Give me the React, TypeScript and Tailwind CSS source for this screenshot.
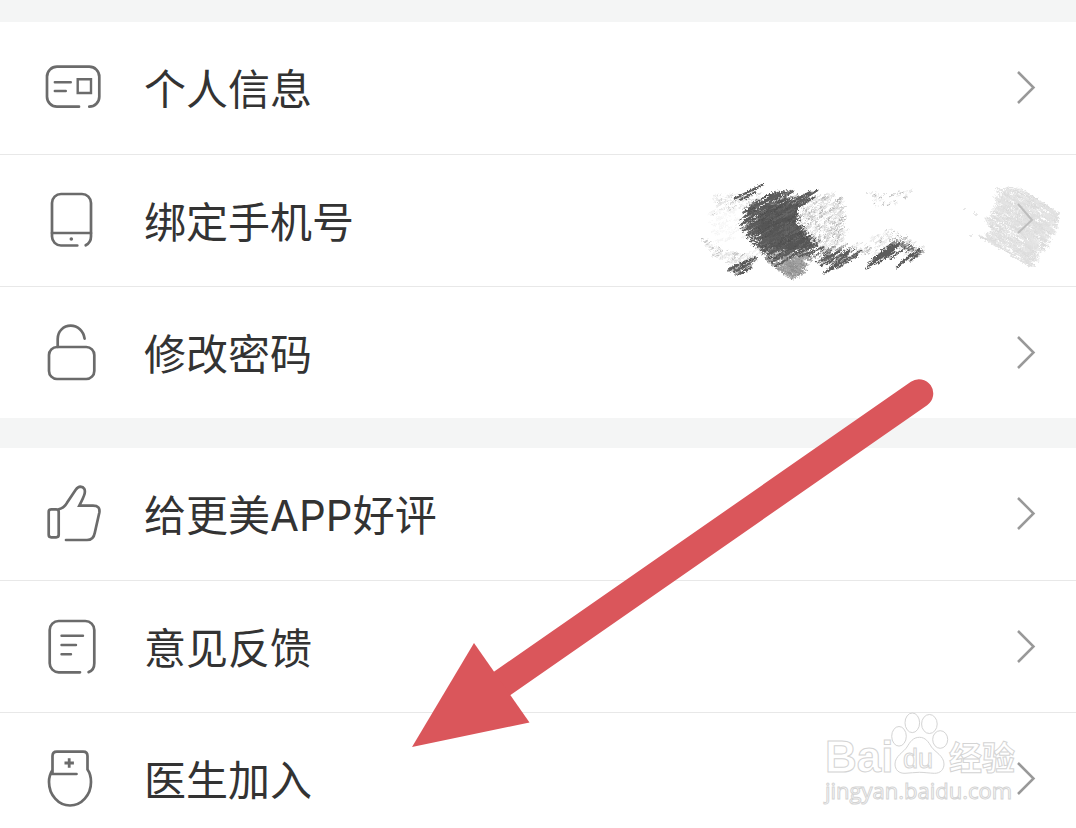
import React from 'react';

const CardIcon = () => (
  <>
    <path d="M35 48.7H13a10 10 0 0 1-10-10V18.7a10 10 0 0 1 10-10h32.3a10 10 0 0 1 10 10v20a10 10 0 0 1-10 10" />
    <path d="M10.8 24.3h16M10.8 33h11" strokeWidth="2.4" />
    <path d="M33.7 21.3H47V35H33.7z" strokeWidth="2.4" strokeLinecap="butt" />
  </>
);

const PhoneIcon = () => (
  <>
    <path d="M33.3 54.5H17a9 9 0 0 1-9-9V12a9 9 0 0 1 9-9h21a9 9 0 0 1 9 9v33.5q0 6-5.3 8.8" />
    <path d="M8 42h39" />
    <circle cx="27.3" cy="48" r="1.8" fill="currentColor" stroke="none" />
  </>
);

const LockIcon = () => (
  <>
    <rect x="5" y="24" width="45.3" height="32" rx="8" />
    <path d="M13.7 24v-8c0-8 6-13.3 13-13.3S39.5 8 40.6 15.6" />
  </>
);

const ThumbIcon = () => (
  <>
    <rect x="4.7" y="25.3" width="10" height="28" rx="2.5" />
    <path d="M14.7 25.3q5.3-1.3 8.3-6.5l8.7-13Q34 2.7 36.3 2.7q5.7.5 4.3 7-.6 2.7-5.3 12H49q7.5 0 6.3 7l-4.5 20Q49.5 56 43 56H22" />
  </>
);

const NoteIcon = () => (
  <>
    <path d="M36 55.3H14.7a9 9 0 0 1-9-9V13a9 9 0 0 1 9-9h26.6a9 9 0 0 1 9 9v33.3q0 7-5.7 8.8" />
    <path d="M17.5 18.7H39M17.5 28H32M17.5 37.3H27" strokeWidth="2.4" />
  </>
);

const DoctorIcon = () => (
  <>
    <path d="M32.5 25H8.5V7q0-4.3 4.3-4.3h26.4q4.3 0 4.3 4.3v13.5C46 24 47 28 47 33c0 13-9.5 23.5-21 23.5S5 46 5 33c0-4.5 1.2-8.5 3.5-12" />
    <path d="M20.5 14h9.4M25.2 9.3v9.4" strokeWidth="2.8" strokeLinecap="butt" />
  </>
);

const groups = [
  [
    { label: '个人信息', icon: <CardIcon /> },
    { label: '绑定手机号', icon: <PhoneIcon />, hidden: true },
    { label: '修改密码', icon: <LockIcon /> },
  ],
  [
    { label: '给更美APP好评', icon: <ThumbIcon /> },
    { label: '意见反馈', icon: <NoteIcon /> },
    { label: '医生加入', icon: <DoctorIcon />, watermark: true },
  ],
];

// brush areas: corners, number of hairs, hair length, slope, colours
const brushes = [
  { area: [[12, 68], [30, 76], [50, 84], [75, 74], [66, 92], [40, 94], [22, 82]], count: 130, length: 6, slope: -0.5, colors: ['#e0e0e0', '#c4c4c4', '#f0f0f0'] },
  { area: [[24, 24], [74, 20], [60, 36], [20, 46]], count: 90, length: 6, slope: -0.5, colors: ['#e8e8e8', '#d2d2d2', '#f2f2f2'] },
  { area: [[20, 40], [50, 36], [56, 70], [24, 72]], count: 80, length: 7, slope: -0.5, colors: ['#f8f8f8', '#f4f4f4'] },
  { area: [[112, 28], [142, 22], [154, 30], [158, 74], [136, 84], [110, 60]], count: 420, length: 6, slope: -0.7, colors: ['#dedede', '#cfcfcf', '#ececec', '#b4b4b4'] },
  { area: [[176, 22], [228, 18], [216, 32], [186, 36]], count: 45, length: 4, slope: -0.5, colors: ['#e6e6e6', '#bcbcbc'] },
  { area: [[160, 76], [200, 56], [242, 80], [214, 84], [176, 84]], count: 150, length: 5, slope: -0.6, colors: ['#dddddd', '#b4b4b4', '#ededed'] },
  { area: [[74, 86], [122, 80], [112, 102], [98, 107], [84, 96]], count: 330, length: 8, slope: 0.6, colors: ['#8c8c8c', '#9b9b9b', '#a8a8a8'] },
  { area: [[58, 34], [74, 24], [98, 20], [104, 28], [124, 20], [108, 38], [108, 52], [114, 62], [126, 72], [108, 82], [84, 88], [66, 72], [52, 54]], count: 620, length: 12, slope: -0.55, colors: ['#4e4e4e', '#5a5a5a', '#555555', '#686868'] },
  { area: [[38, 97], [66, 86], [60, 97], [50, 104]], count: 60, length: 8, slope: -0.6, colors: ['#4a4a4a', '#6e6e6e', '#888888'] },
  { area: [[118, 82], [136, 76], [170, 78], [150, 92], [134, 92]], count: 60, length: 11, slope: -0.7, colors: ['#555555', '#777777', '#909090'] },
  { area: [[178, 92], [202, 70], [210, 74], [196, 86]], count: 45, length: 10, slope: -0.7, colors: ['#4c4c4c', '#6a6a6a'] },
  { area: [[204, 70], [234, 80], [226, 88], [222, 82]], count: 40, length: 8, slope: -0.7, colors: ['#606060', '#858585', '#a2a2a2'] },
  { area: [[308, 18], [332, 18], [368, 42], [364, 60], [354, 78], [340, 96], [290, 66], [304, 62], [298, 50], [306, 42]], count: 1100, length: 10, slope: 0.55, colors: ['#e2e2e2', '#dedede', '#e5e5e5', '#dadada'] },
];

// loose bristle ends round the brushed areas
const bristles = [
  'M44 28 74 13M50 29 66 21M58 38 90 22M66 34 98 20M60 44 84 28M54 50 80 34M100 32 122 20M104 34 128 19M106 38 126 25',
  'M50 54 66 44M52 60 72 50M56 65 72 56M60 71 80 61M66 74 84 66M70 80 90 70M76 84 96 76M80 92 110 76M84 96 104 84',
  'M112 80 130 70M104 84 128 74M108 86 134 76M40 98 56 90M44 101 60 92M50 103 62 96',
  'M134 103 158 82M138 100 172 79M126 92 150 80M130 95 160 80M146 98 168 84M176 98 206 74M178 95 200 76M186 93 206 80',
  'M200 88 216 76M206 97 222 82M212 92 230 78M194 86 210 72M220 90 228 83',
];

const inside = (x, y, area) => {
  let hit = false;
  for (let i = 0, j = area.length - 1; i < area.length; j = i++) {
    const [xi, yi] = area[i];
    const [xj, yj] = area[j];
    if (yi > y !== yj > y && x < ((xj - xi) * (y - yi)) / (yj - yi) + xi) hit = !hit;
  }
  return hit;
};

const makeHairs = () => {
  let seed = 17;
  const random = () => {
    seed = (seed * 16807) % 2147483647;
    return seed / 2147483647;
  };
  const hairs = [];
  brushes.forEach(({ area, count, length, slope, colors }) => {
    const xs = area.map((p) => p[0]);
    const ys = area.map((p) => p[1]);
    const left = Math.min(...xs);
    const top = Math.min(...ys);
    let drawn = 0;
    while (drawn < count) {
      const x = left + random() * (Math.max(...xs) - left);
      const y = top + random() * (Math.max(...ys) - top);
      if (!inside(x, y, area)) continue;
      const size = length * (0.3 + random() * 0.7);
      const color = colors[Math.floor(random() * colors.length)];
      hairs.push({ x: x - size / 2, y: y - (size * slope) / 2, dx: size, dy: size * slope, color });
      drawn++;
    }
  });
  return hairs;
};

const hairs = makeHairs();

const Scribble = () => (
  <svg className="absolute top-4 right-0 w-[386px] h-[120px]" viewBox="0 0 386 120" fill="none" aria-hidden="true">
    <defs>
      <filter id="grain">
        <feTurbulence type="fractalNoise" baseFrequency="0.6" numOctaves="2" seed="4" />
        <feDisplacementMap in="SourceGraphic" scale="4" xChannelSelector="R" yChannelSelector="G" />
      </filter>
    </defs>
    <g filter="url(#grain)">
      <path d="M68 44 80 34 108 32 106 52 124 74 100 80 80 76 68 60z" fill="#555555" />
      {hairs.map((h, i) => (
        <path key={i} d={`M${h.x.toFixed(1)} ${h.y.toFixed(1)}l${h.dx.toFixed(1)} ${h.dy.toFixed(1)}`} stroke={h.color} strokeWidth="1" />
      ))}
      {bristles.map((d) => (
        <path key={d} d={d} stroke="#5c5c5c" strokeWidth="2" />
      ))}
      <path d="M274 38h2M283 41h2M285 44h2M279 65h3" stroke="#d0d0d0" />
    </g>
    <path d="M328 33 342 49 328 62" stroke="#bdbdbd" strokeWidth="2" />
  </svg>
);

const Watermark = () => (
  <svg
    className="absolute -top-1 right-14 w-[200px] h-[104px]"
    viewBox="0 0 200 104"
    fill="#ffffff"
    stroke="#d4d4d4"
    strokeWidth="1"
  >
    <text x="5" y="63" className="font-['Liberation_Sans'] font-bold text-[44px]">Bai</text>
    <ellipse cx="79" cy="27.3" rx="7.3" ry="9.8" />
    <ellipse cx="92.3" cy="13.8" rx="7.3" ry="9.8" />
    <ellipse cx="109.4" cy="15" rx="7.8" ry="9.5" />
    <ellipse cx="120.2" cy="30.5" rx="7.5" ry="8.8" />
    <path d="M99.5 28.3C93 28.3 90 33 87 38c-3 5-12 9-12 17 0 6 4 9.5 10 9.3 5-.2 10-1 14.5-1s10 .9 15 1c6 .1 9.5-4 9.5-9.3 0-8-9-12-12.5-17-3-5-6-9.7-12-9.7z" />
    <text x="83" y="59" className="font-['Liberation_Sans'] text-[27px]">du</text>
    <text x="129" y="61" className="font-['Noto_Sans_CJK_SC',sans-serif] font-bold text-[33px]">经验</text>
    <text x="5" y="90" className="font-['Open_Sans'] text-[22px]">jingyan.baidu.com</text>
  </svg>
);

const Row = ({ item, first }) => (
  <a
    href="#"
    className={`relative flex items-center h-[132px] pl-11 pr-10 bg-white ${first ? '' : 'border-t border-[#e8e8e8]'}`}
  >
    <svg
      className="w-[60px] h-[60px] shrink-0 text-[#6b6b6b]"
      viewBox="0 0 60 60"
      fill="none"
      stroke="currentColor"
      strokeWidth="2.7"
      strokeLinecap="round"
      aria-hidden="true"
    >
      {item.icon}
    </svg>
    <span className="ml-10 pt-1 flex-1 text-[42px] leading-[60px] text-[#333333]">{item.label}</span>
    {item.watermark && <Watermark />}
    {item.hidden ? (
      <Scribble />
    ) : (
      <svg className="relative w-5 h-9 shrink-0" viewBox="0 0 20 36" fill="none" stroke="#999999" strokeWidth="2.5" aria-hidden="true">
        <path d="M2 2 17.5 17.5 2 33" />
      </svg>
    )}
  </a>
);

const App = () => {
  return (
    <main className="relative h-screen overflow-hidden bg-[#f4f5f5] pt-[22px] font-['Inter','Noto_Sans_CJK_SC',sans-serif]">
      <div className="flex flex-col gap-[30px]">
        {groups.map((items, i) => (
          <section key={i}>
            {items.map((item, j) => (
              <Row key={item.label} item={item} first={j === 0} />
            ))}
          </section>
        ))}
      </div>
      <svg className="absolute left-[412px] top-[378px] w-[524px] h-[370px] pointer-events-none" viewBox="0 0 524 370" aria-hidden="true">
        <path d="M507 15.5 85 309" stroke="#da565b" strokeWidth="28.5" strokeLinecap="round" />
        <path d="M0 369 62 265 117.5 344.5z" fill="#da565b" />
      </svg>
    </main>
  );
};

export default App;
